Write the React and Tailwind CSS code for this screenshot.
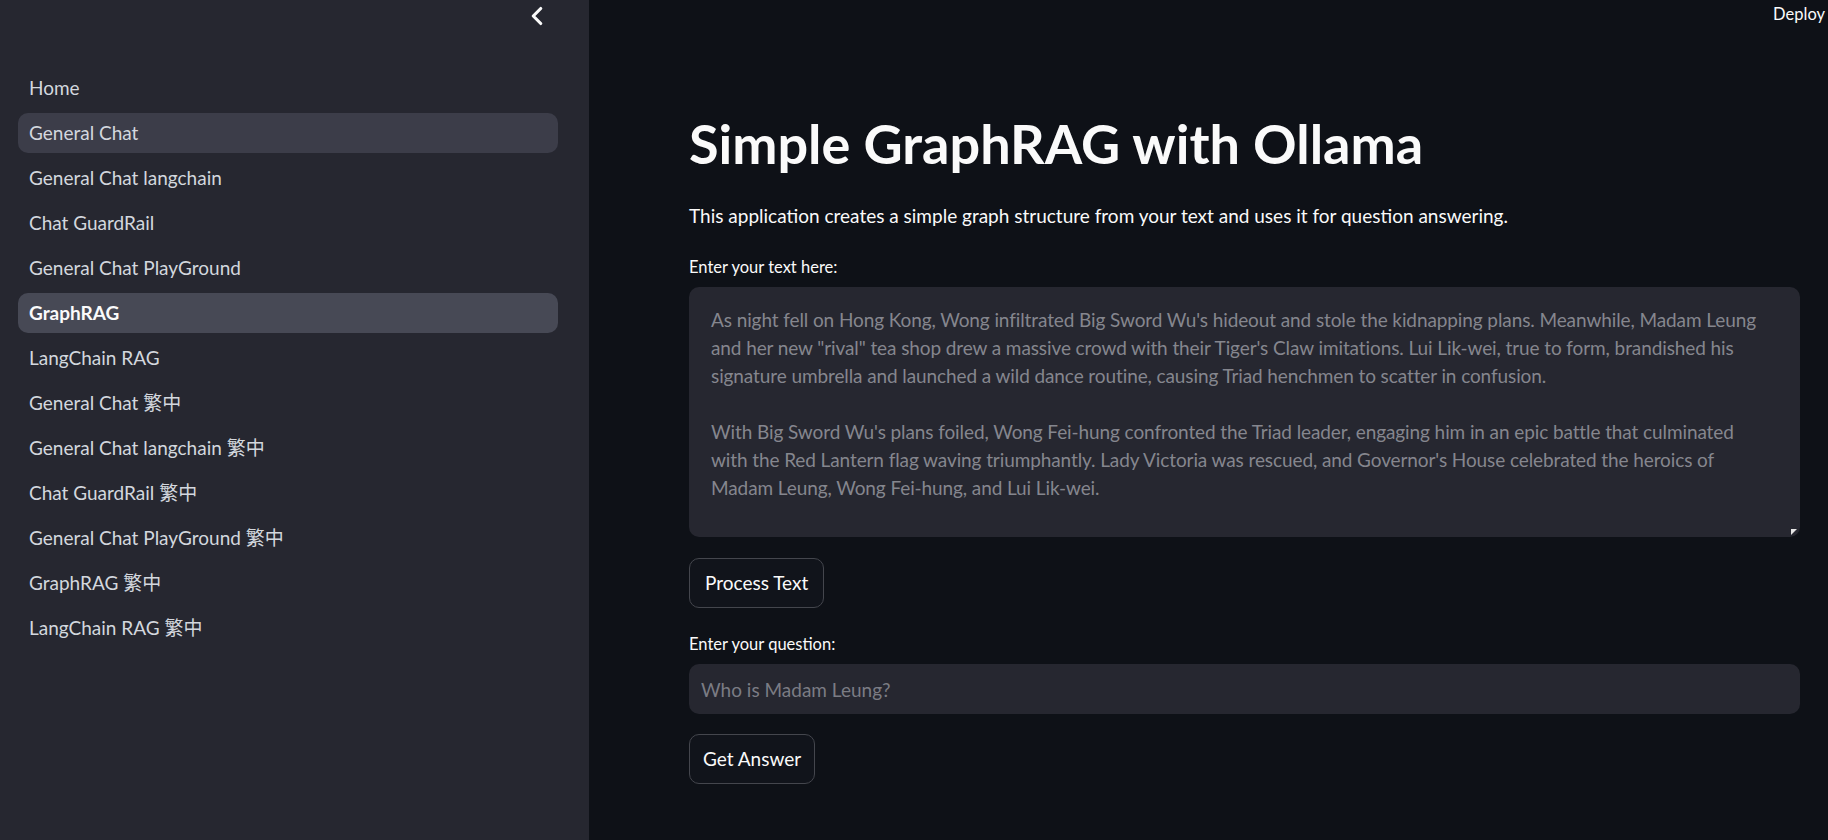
import { ChevronLeft } from 'lucide-react'
import clsx from 'clsx'

const pages = [
  { label: 'Home' },
  { label: 'General Chat', hover: true },
  { label: 'General Chat langchain' },
  { label: 'Chat GuardRail' },
  { label: 'General Chat PlayGround' },
  { label: 'GraphRAG', active: true },
  { label: 'LangChain RAG' },
  { label: 'General Chat 繁中' },
  { label: 'General Chat langchain 繁中' },
  { label: 'Chat GuardRail 繁中' },
  { label: 'General Chat PlayGround 繁中' },
  { label: 'GraphRAG 繁中' },
  { label: 'LangChain RAG 繁中' },
]

const story = [
  "As night fell on Hong Kong, Wong infiltrated Big Sword Wu's hideout and stole the kidnapping plans. Meanwhile, Madam Leung",
  'and her new "rival" tea shop drew a massive crowd with their Tiger\'s Claw imitations. Lui Lik-wei, true to form, brandished his',
  'signature umbrella and launched a wild dance routine, causing Triad henchmen to scatter in confusion.',
  '',
  "With Big Sword Wu's plans foiled, Wong Fei-hung confronted the Triad leader, engaging him in an epic battle that culminated",
  "with the Red Lantern flag waving triumphantly. Lady Victoria was rescued, and Governor's House celebrated the heroics of",
  'Madam Leung, Wong Fei-hung, and Lui Lik-wei.',
  '',
  'In the aftermath, the friends gathered at Po Chi Lam to celebrate their victory, sharing tea and laughter late into the night.',
]

function Sidebar() {
  return (
    <aside className="w-[589px] shrink-0 bg-[#262730] flex flex-col">
      {/* Header */}
      <div className="h-[32px] flex items-center justify-end pr-[37px]">
        <ChevronLeft size={30} strokeWidth={2.5} className="text-[#fafafa]" />
      </div>

      {/* Navigation */}
      <nav className="pt-[36px] pl-[18px] pr-[31px] flex flex-col gap-[5px]">
        {pages.map((p) => (
          <div
            key={p.label}
            className={clsx(
              'h-10 flex items-center px-[11px] rounded-[10px] text-[19px] leading-[28px]',
              p.active && 'bg-[#474955] text-[#fafafa] font-bold',
              p.hover && 'bg-[#3c3d49] text-[#d3d7de]',
              !p.active && !p.hover && 'text-[#d3d7de]'
            )}
          >
            {p.label}
          </div>
        ))}
      </nav>
    </aside>
  )
}

export default function App() {
  return (
    <div className="flex h-screen w-full overflow-hidden bg-[#0e1117] text-[#fafafa] font-[family-name:Lato,'Noto_Sans_CJK_TC',sans-serif]">
      <Sidebar />

      <main className="flex-1 flex flex-col min-w-0">
        {/* Top bar */}
        <div className="h-[28px] flex items-center justify-end pr-[3px]">
          <span className="text-[16.5px]">Deploy</span>
        </div>

        <div className="pl-[100px] pr-[28px] flex flex-col">
          <h1 className="mt-[83px] text-[54px] leading-[66px] font-bold">Simple GraphRAG with Ollama</h1>
          <p className="mt-[25px] text-[19px] leading-[28px]">
            This application creates a simple graph structure from your text and uses it for question answering.
          </p>

          <label className="mt-[25px] text-[16.5px] leading-[24px]">Enter your text here:</label>
          <div className="relative mt-[8px] h-[250px] rounded-[10px] bg-[#262730] overflow-hidden">
            <div className="pt-[19px] pl-[22px] pr-[20px] text-[19px] leading-[28px] tracking-[-0.1px] text-[#85868e] whitespace-pre">
              {story.map((line, i) => (
                <div key={i} className="h-[28px]">{line}</div>
              ))}
            </div>
            <svg width="8" height="8" viewBox="0 0 8 8" className="absolute right-[2px] bottom-[1px]">
              <path d="M1 1 L7 1 L1 7 Z" fill="#e6e6e6" />
            </svg>
          </div>

          <div className="mt-[21px]">
            <button className="h-[50px] px-[15px] rounded-[10px] border border-[#44464d] bg-[#11141b] text-[19px] text-[#fafafa]">
              Process Text
            </button>
          </div>

          <label className="mt-[24px] text-[16.5px] leading-[24px]">Enter your question:</label>
          <input
            className="mt-[8px] h-[50px] rounded-[10px] bg-[#262730] pl-[12px] text-[19px] outline-none placeholder:text-[#7b7c84]"
            placeholder="Who is Madam Leung?"
          />

          <div className="mt-[20px]">
            <button className="h-[50px] px-[13px] rounded-[10px] border border-[#44464d] bg-[#11141b] text-[19px] text-[#fafafa]">
              Get Answer
            </button>
          </div>
        </div>
      </main>
    </div>
  )
}
